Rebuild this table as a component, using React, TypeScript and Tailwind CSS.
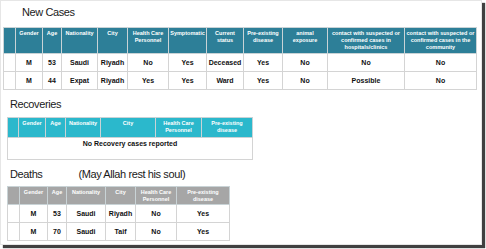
import React from "react"

type Col = { label: string[]; width: number }

const font = { fontFamily: '"Liberation Sans", Arial, sans-serif' }

// New cases table
const newCols: Col[] = [
  { label: [""], width: 12 },
  { label: ["Gender"], width: 27 },
  { label: ["Age"], width: 19 },
  { label: ["Nationality"], width: 36 },
  { label: ["City"], width: 30 },
  { label: ["Health Care", "Personnel"], width: 41 },
  { label: ["Symptomatic"], width: 38 },
  { label: ["Current", "status"], width: 37 },
  { label: ["Pre-existing", "disease"], width: 39 },
  { label: ["animal", "exposure"], width: 45 },
  { label: ["contact with suspected or", "confirmed cases in", "hospitals/clinics"], width: 77 },
  { label: ["contact with suspected or", "confirmed cases in the", "community"], width: 72 },
]

const newRows = [
  ["", "M", "53", "Saudi", "Riyadh", "No", "Yes", "Deceased", "Yes", "No", "No", "No"],
  ["", "M", "44", "Expat", "Riyadh", "Yes", "Yes", "Ward", "Yes", "No", "Possible", "No"],
]

const recCols: Col[] = [
  { label: [""], width: 11 },
  { label: ["Gender"], width: 27 },
  { label: ["Age"], width: 20 },
  { label: ["Nationality"], width: 35 },
  { label: ["City"], width: 55 },
  { label: ["Health Care", "Personnel"], width: 46 },
  { label: ["Pre-existing", "disease"], width: 51 },
]

const deathCols: Col[] = [
  { label: [""], width: 12 },
  { label: ["Gender"], width: 28 },
  { label: ["Age"], width: 19 },
  { label: ["Nationality"], width: 39 },
  { label: ["City"], width: 30 },
  { label: ["Health Care", "Personnel"], width: 41 },
  { label: ["Pre-existing", "disease"], width: 53 },
]

const deathRows = [
  ["", "M", "53", "Saudi", "Riyadh", "No", "Yes"],
  ["", "M", "70", "Saudi", "Taif", "No", "Yes"],
]

function Header({ cols, headClass, rowClass }: { cols: Col[]; headClass: string; rowClass: string }) {
  return (
    <thead>
      <tr className={`${headClass} ${rowClass}`}>
        {cols.map((c, i) => (
          <th
            key={i}
            className="border border-[#c9d3d6] align-top pt-[2px] px-[1px] text-[5.5px] leading-[7px] font-bold text-white text-center"
          >
            {c.label.map((l, j) => (
              <div key={j} className="whitespace-nowrap">
                {l}
              </div>
            ))}
          </th>
        ))}
      </tr>
    </thead>
  )
}

function Body({ rows }: { rows: string[][] }) {
  return (
    <tbody>
      {rows.map((r, i) => (
        <tr key={i} className="h-[18px]">
          {r.map((v, j) => (
            <td
              key={j}
              className="border border-[#d4d4d4] text-center align-middle text-[7px] leading-[8px] font-bold text-[#111]"
            >
              {v}
            </td>
          ))}
        </tr>
      ))}
    </tbody>
  )
}

function Colgroup({ cols }: { cols: Col[] }) {
  return (
    <colgroup>
      {cols.map((c, i) => (
        <col key={i} style={{ width: c.width }} />
      ))}
    </colgroup>
  )
}

export default function App() {
  return (
    <div className="w-[486px] h-[249px] bg-white" style={font}>
      <div className="w-[482px] h-[245px] bg-white border border-[#e6e6e6] shadow-[3px_3px_1px_#404040] flex flex-col">
        {/* New Cases */}
        <h2 className="ml-[21px] mt-[4px] text-[11px] leading-[15px] tracking-[-0.4px] text-[#1a1a1a] font-normal">
          New Cases
        </h2>
        <table className="ml-[2px] mt-[7px] w-[473px] table-fixed border-collapse">
          <Colgroup cols={newCols} />
          <Header cols={newCols} headClass="bg-[#2d7f98]" rowClass="h-[26px]" />
          <Body rows={newRows} />
        </table>

        {/* Recoveries */}
        <h2 className="ml-[9px] mt-[7px] text-[11px] leading-[15px] tracking-[-0.4px] text-[#1a1a1a] font-normal">
          Recoveries
        </h2>
        <table className="ml-[6px] mt-[5px] w-[245px] table-fixed border-collapse">
          <Colgroup cols={recCols} />
          <Header cols={recCols} headClass="bg-[#2bb8cc]" rowClass="h-[20px]" />
          <tbody>
            <tr className="h-[22px]">
              <td
                colSpan={7}
                className="border border-[#d4d4d4] text-center align-top pt-[2px] text-[7px] leading-[8px] font-bold text-[#111]"
              >
                No Recovery cases reported
              </td>
            </tr>
          </tbody>
        </table>

        {/* Deaths */}
        <h2 className="ml-[9px] mt-[7px] flex text-[11px] leading-[15px] tracking-[-0.4px] text-[#1a1a1a] font-normal">
          <span>Deaths</span>
          <span className="ml-[36px]">(May Allah rest his soul)</span>
        </h2>
        <table className="ml-[6px] mt-[4px] w-[222px] table-fixed border-collapse">
          <Colgroup cols={deathCols} />
          <Header cols={deathCols} headClass="bg-[#a6a6a6]" rowClass="h-[18px]" />
          <Body rows={deathRows} />
        </table>
      </div>
    </div>
  )
}
